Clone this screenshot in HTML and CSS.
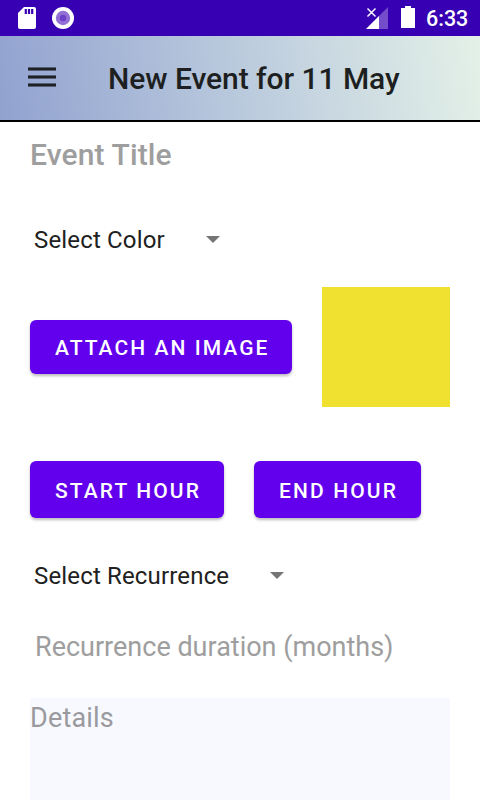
FILE: index.html
```html
<!DOCTYPE html>
<html lang="en">
<head>
<meta charset="utf-8">
<title>New Event</title>
<link rel="stylesheet" href="styles.css">
</head>
<body>
<div class="status">
  <svg class="sd" width="18" height="22" viewBox="0 0 18 22"><path fill="#fff" d="M6 0H16Q18 0 18 2V20Q18 22 16 22H2Q0 22 0 20V6Z"/><path fill="#3700b3" d="M6.700 2h2.200v5h-2.200zM9.900 2h2.200v5h-2.200zM13.100 2h2.200v5h-2.200z"/></svg>
  <svg class="ring" width="22" height="22" viewBox="0 0 22 22"><circle cx="11" cy="11" r="11" fill="#fff"/><circle cx="11" cy="11" r="7.200" fill="#9370d6"/><circle cx="11" cy="11" r="3.200" fill="#6c40c8"/></svg>
  <svg class="signal" width="22" height="22" viewBox="0 0 22 22"><path fill="#fff" fill-opacity=".3" d="M22 0V22H0Z"/><path fill="#3700b3" d="M0 0h13v9H0z"/><path fill="#fff" d="M13 9V22H0Z"/><path stroke="#fff" stroke-width="1.500" d="M1.500 1.500l8 8M9.500 1.500l-8 8"/></svg>
  <svg class="battery" width="14" height="22" viewBox="0 0 14 22"><path fill="#fff" d="M4 0h6v2h4v20H0V2h4z"/></svg>
  <span class="time">6:33</span>
</div>
<header class="bar">
  <svg class="menu" width="28" height="20" viewBox="0 0 28 20"><path fill="#1d2024" fill-opacity=".55" d="M0 0h28v4H0zM0 8h28v4H0zM0 16h28v4H0z"/><path fill="#1d2024" d="M0 1h28v2H0zM0 9h28v2H0zM0 17h28v2H0z"/></svg>
  <h1>New Event for 11 May</h1>
</header>
<main>
  <div class="title">Event Title</div>
  <div class="select color"><span>Select Color</span><i></i></div>
  <div class="image-row"><button class="attach">ATTACH AN IMAGE</button><div class="swatch"></div></div>
  <div class="hours"><button class="start">START HOUR</button><button class="end">END HOUR</button></div>
  <div class="select recurrence"><span>Select Recurrence</span><i></i></div>
  <div class="duration">Recurrence duration (months)</div>
  <div class="details">Details</div>
</main>
</body>
</html>
```

FILE: styles.css
```css
* { box-sizing: border-box; }
body { margin: 0; height: 800px; overflow: hidden; background: #fff; font-family: Roboto, sans-serif; color: #212121; white-space: nowrap; }
svg { display: block; flex: none; }
.status { height: 36px; padding-left: 18px; display: flex; align-items: center; background: #3700b3; color: #fff; }
.ring { margin-left: 16px; }
.signal { margin-left: 292px; }
.battery { margin-left: 13px; margin-top: -2px; }
.time { margin-left: 11px; padding-top: 2px; font-size: 21.5px; font-weight: 500; line-height: 36px; }
.bar { height: 86px; padding-left: 28px; display: flex; align-items: center; border-bottom: 2px solid #000; background: linear-gradient(80deg, #91a2d0, #b7c7dc 46%, #e4f1e8); }
.menu { margin-top: -2px; }
h1 { margin: 2px 0 0 52px; font-size: 30px; font-weight: 500; line-height: 36px; letter-spacing: -.05px; color: #1d1f20; }
main { padding: 0 30px; }
.title { height: 66px; padding-top: 15px; font-size: 30px; line-height: 36px; font-weight: 500; letter-spacing: .12px; color: #9e9e9e; }
.select { display: flex; align-items: center; height: 30px; padding-left: 4px; font-size: 24px; }
.select span { letter-spacing: .16px; }
.color { margin-top: 37px; }
.select i { border: 7.5px solid transparent; border-top: 7.5px solid #757575; border-bottom: 0; margin-bottom: 1px; }
.color i { margin-left: 41px; }
.image-row { margin-top: 32px; height: 120px; display: flex; align-items: center; justify-content: space-between; }
button { padding: 2px 0 0 25px; text-align: left; border: 0; border-radius: 6px; background: #6200ee; color: #fff; font: 500 21px Roboto, sans-serif; letter-spacing: 2.06px; box-shadow: 0 2px 3px #0004; }
.attach { width: 262px; height: 54px; }
.swatch { width: 128px; height: 120px; background: #f0e130; }
.hours { display: flex; gap: 30px; margin-top: 54px; }
.hours button { height: 57px; letter-spacing: 2.12px; }
.start { width: 194px; }
.end { width: 167px; }
.recurrence { margin-top: 43px; }
.recurrence i { margin-left: 41px; }
.duration { margin-top: 40px; padding-left: 5px; font-size: 27px; line-height: 32px; color: #9e9e9e; }
.details { margin-top: 35px; height: 102px; padding-top: 4px; background: #f7f9ff; font-size: 27px; line-height: 32px; letter-spacing: .18px; color: #9a9a9e; }
```
